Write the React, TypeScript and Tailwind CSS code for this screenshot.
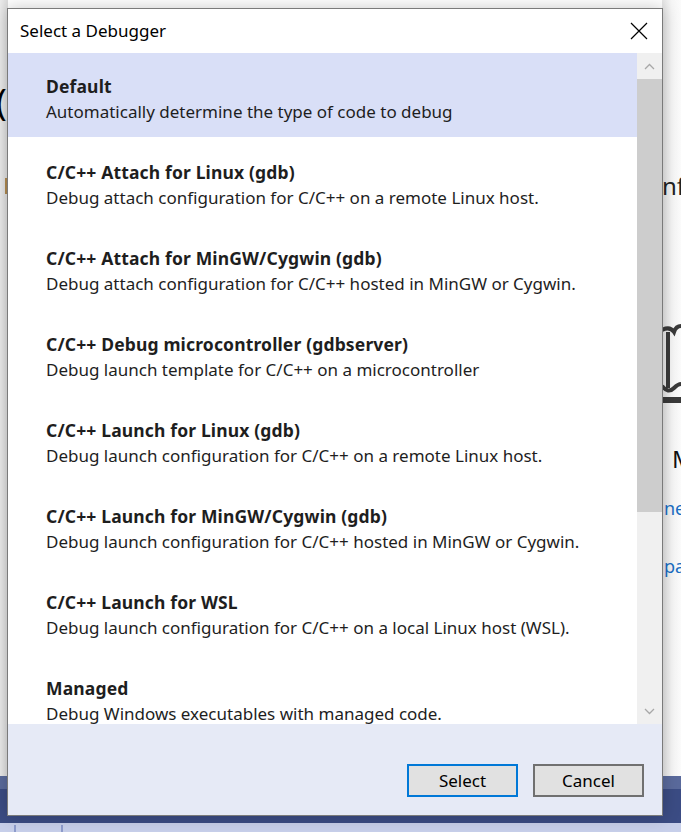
import React from "react";

const items = [
  { t: "Default", d: "Automatically determine the type of code to debug" },
  { t: "C/C++ Attach for Linux (gdb)", d: "Debug attach configuration for C/C++ on a remote Linux host." },
  { t: "C/C++ Attach for MinGW/Cygwin (gdb)", d: "Debug attach configuration for C/C++ hosted in MinGW or Cygwin." },
  { t: "C/C++ Debug microcontroller (gdbserver)", d: "Debug launch template for C/C++ on a microcontroller" },
  { t: "C/C++ Launch for Linux (gdb)", d: "Debug launch configuration for C/C++ on a remote Linux host." },
  { t: "C/C++ Launch for MinGW/Cygwin (gdb)", d: "Debug launch configuration for C/C++ hosted in MinGW or Cygwin." },
  { t: "C/C++ Launch for WSL", d: "Debug launch configuration for C/C++ on a local Linux host (WSL)." },
  { t: "Managed", d: "Debug Windows executables with managed code." },
];

const font = { fontFamily: '"Segoe UI", "Noto Sans", "Open Sans", sans-serif' };

export default function App() {
  return (
    <div className="relative w-[681px] h-[832px] overflow-hidden bg-white" style={font}>
      {/* background page */}
      <div className="absolute inset-0 flex flex-col">
        <div className="flex flex-1">
          <div className="w-[8px] bg-gradient-to-r from-[#ececec] to-[#dcdcdc] relative">
            <span className="absolute left-[-4px] top-[84px] text-[36px] leading-none text-black">(</span>
            <span className="absolute left-[5px] top-[178px] w-[3px] h-[16px] bg-[#b08a50]" />
          </div>
          <div className="flex-1" />
          <div className="w-[19px] bg-gradient-to-r from-[#e4e4e4] via-[#f6f6f6] to-[#fbfbfb] relative">
            <span className="absolute left-[0px] top-[174px] text-[24px] leading-none text-[#222]">nf</span>
            <svg className="absolute left-[0px] top-[322px]" width="19" height="84" viewBox="0 0 19 84">
              <path d="M0 8 Q8 4 12 10 Q14 4 19 4" stroke="#3a3a3a" strokeWidth="4" fill="none" />
              <path d="M6 10 V66" stroke="#3a3a3a" strokeWidth="4" fill="none" />
              <path d="M0 64 Q6 72 12 66 Q16 62 19 62" stroke="#3a3a3a" strokeWidth="4" fill="none" />
              <rect x="0" y="75" width="19" height="6" fill="#3a3a3a" />
            </svg>
            <span className="absolute left-[10px] top-[447px] text-[24px] leading-none text-[#111]">M</span>
            <span className="absolute left-[2px] top-[499px] text-[18px] leading-none text-[#1a6fc4]">ne</span>
            <span className="absolute left-[2px] top-[557px] text-[18px] leading-none text-[#1a6fc4]">pa</span>
          </div>
        </div>
        <div className="h-[13px] bg-[#5a6a9c]" />
        <div className="h-[34px] bg-[#3b4c84]" />
        <div className="h-[9px] bg-[#c7cfea] relative">
          <span className="absolute left-[14px] top-[2px] w-[2px] h-[7px] bg-[#8e9ccc]" />
          <span className="absolute left-[61px] top-[2px] w-[2px] h-[7px] bg-[#8e9ccc]" />
        </div>
      </div>

      {/* dialog window */}
      <div className="absolute left-[7px] top-[8px] w-[656px] h-[808px] border border-[#7a7a7a] bg-white flex flex-col shadow-[0_0_16px_rgba(0,0,0,0.22)]">
        <div className="h-[44px] shrink-0 flex items-center justify-between pl-[12px] pr-[14px]">
          <span className="text-[17px] text-black">Select a Debugger</span>
          <svg width="18" height="18" viewBox="0 0 18 18">
            <path d="M1 1 L17 17 M17 1 L1 17" stroke="#000" strokeWidth="1.2" />
          </svg>
        </div>
        <div className="h-[671px] shrink-0 flex">
          <div className="flex-1 overflow-hidden">
            {items.map((it, i) => (
              <div
                key={i}
                className={`h-[84px] mb-[2px] pl-[38px] pt-[21px] leading-[25px] text-[#1e1e1e] whitespace-nowrap ${i === 0 ? "bg-[#d9dff7]" : ""}`}
              >
                <div className="font-bold text-[17.5px] tracking-[0.15px]">{it.t}</div>
                <div className="text-[17px]">{it.d}</div>
              </div>
            ))}
          </div>
          <div className="w-[25px] bg-[#f0f0f0] flex flex-col">
            <div className="h-[26px] flex items-center justify-center">
              <svg width="11" height="7" viewBox="0 0 11 7">
                <path d="M1 6 L5.5 1.5 L10 6" stroke="#a8a8a8" strokeWidth="1.3" fill="none" />
              </svg>
            </div>
            <div className="h-[433px] bg-[#cdcdcd]" />
            <div className="flex-1" />
            <div className="h-[26px] flex items-center justify-center">
              <svg width="11" height="7" viewBox="0 0 11 7">
                <path d="M1 1 L5.5 5.5 L10 1" stroke="#a8a8a8" strokeWidth="1.3" fill="none" />
              </svg>
            </div>
          </div>
        </div>
        <div className="flex-1 bg-[#e6eaf6] flex justify-end items-start pt-[40px] pr-[18px] gap-[15px]">
          <button className="w-[111px] h-[33px] bg-[#e1e1e1] border-2 border-[#0078d7] text-[17px] text-black">Select</button>
          <button className="w-[111px] h-[33px] bg-[#e1e1e1] border-2 border-[#707070] text-[17px] text-black">Cancel</button>
        </div>
      </div>
    </div>
  );
}
